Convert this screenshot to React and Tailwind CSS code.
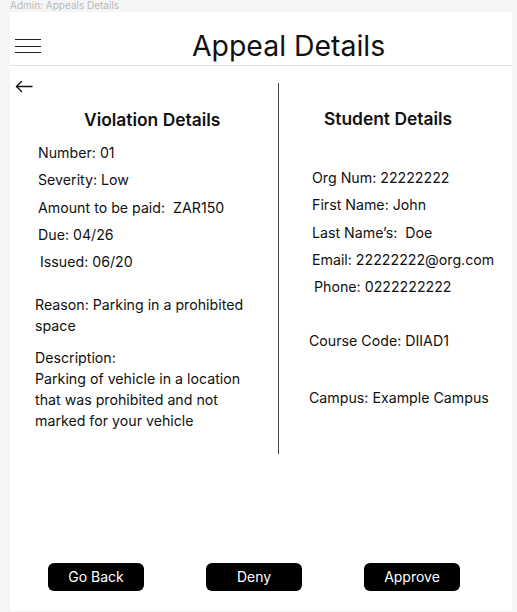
import React from 'react';

const violation = ['Number: 01', 'Severity: Low', 'Amount to be paid:  ZAR150', 'Due: 04/26'];
const student = ['Org Num: 22222222', 'First Name: John', 'Last Name’s:  Doe', 'Email: 22222222@org.com'];

function BackArrow() {
  return (
    <svg width="18" height="13" viewBox="0 0 18 13" fill="none" stroke="#111" strokeWidth="1.4" strokeLinecap="round" strokeLinejoin="round">
      <path d="M17 6.5H1.5" />
      <path d="M6.5 1.5L1.5 6.5L6.5 11.5" />
    </svg>
  );
}

function ActionButton({ children }) {
  return (
    <button className="w-[96px] h-[28px] rounded-[6px] bg-black text-white text-[14px] leading-none">
      {children}
    </button>
  );
}

export default function App() {
  return (
    <div className="w-[517px] h-[612px] bg-[#f5f5f5] flex flex-col font-['Inter','Liberation_Sans',sans-serif] text-[#111]">
      <div className="h-[12px] pl-[10px] text-[10px] leading-[10px] text-[#b9b9b9]">Admin: Appeals Details</div>

      <div className="ml-[10px] w-[502px] h-[599px] bg-white flex flex-col">
        {/* Header */}
        <div className="h-[54px] pt-[15px] border-b border-[#e2e2e2] flex items-center">
          <div className="ml-[5px] w-[26px] flex flex-col gap-[5.5px]">
            <div className="h-px bg-[#222]" />
            <div className="h-px bg-[#222]" />
            <div className="h-px bg-[#222]" />
          </div>
          <h1 className="ml-[151px] text-[28.4px] leading-[32px] font-normal">Appeal Details</h1>
        </div>

        {/* Body */}
        <div className="flex pt-[14px]">
          <div className="w-[268px] flex flex-col">
            <div className="ml-[5px] h-[13px]"><BackArrow /></div>
            <h2 className="mt-[15px] ml-[74px] text-[17.4px] leading-[24px] font-semibold">Violation Details</h2>
            <div className="mt-[11px] ml-[28px] flex flex-col gap-[7.3px] text-[14.2px] leading-[20px]">
              {violation.map(v => <div key={v} className="whitespace-pre">{v}</div>)}
              <div className="ml-[2px]">Issued: 06/20</div>
            </div>
            <p className="mt-[22px] ml-[25px] w-[222px] text-[14.2px] leading-[21px]">Reason: Parking in a prohibited space</p>
            <p className="mt-[11px] ml-[25px] w-[222px] text-[14.2px] leading-[21px]">
              Description:<br />Parking of vehicle in a location that was prohibited and not marked for your vehicle
            </p>
          </div>

          <div className="mt-[3px] w-px h-[371px] bg-[#444]" />

          <div className="flex-1 flex flex-col">
            <h2 className="mt-[27px] ml-[45px] text-[17.4px] leading-[24px] font-semibold">Student Details</h2>
            <div className="mt-[37px] ml-[33px] flex flex-col gap-[7.3px] text-[14.2px] leading-[20px]">
              {student.map(s => <div key={s} className="whitespace-pre">{s}</div>)}
              <div className="ml-[2px]">Phone: 0222222222</div>
            </div>
            <div className="mt-[34px] ml-[30px] text-[14.2px] leading-[20px]">Course Code: DIIAD1</div>
            <div className="mt-[37px] ml-[30px] text-[14.2px] leading-[20px]">Campus: Example Campus</div>
          </div>
        </div>

        {/* Actions */}
        <div className="mt-auto mb-[20px] pl-[38px] flex gap-[62px]">
          <ActionButton>Go Back</ActionButton>
          <ActionButton>Deny</ActionButton>
          <ActionButton>Approve</ActionButton>
        </div>
      </div>
    </div>
  );
}
